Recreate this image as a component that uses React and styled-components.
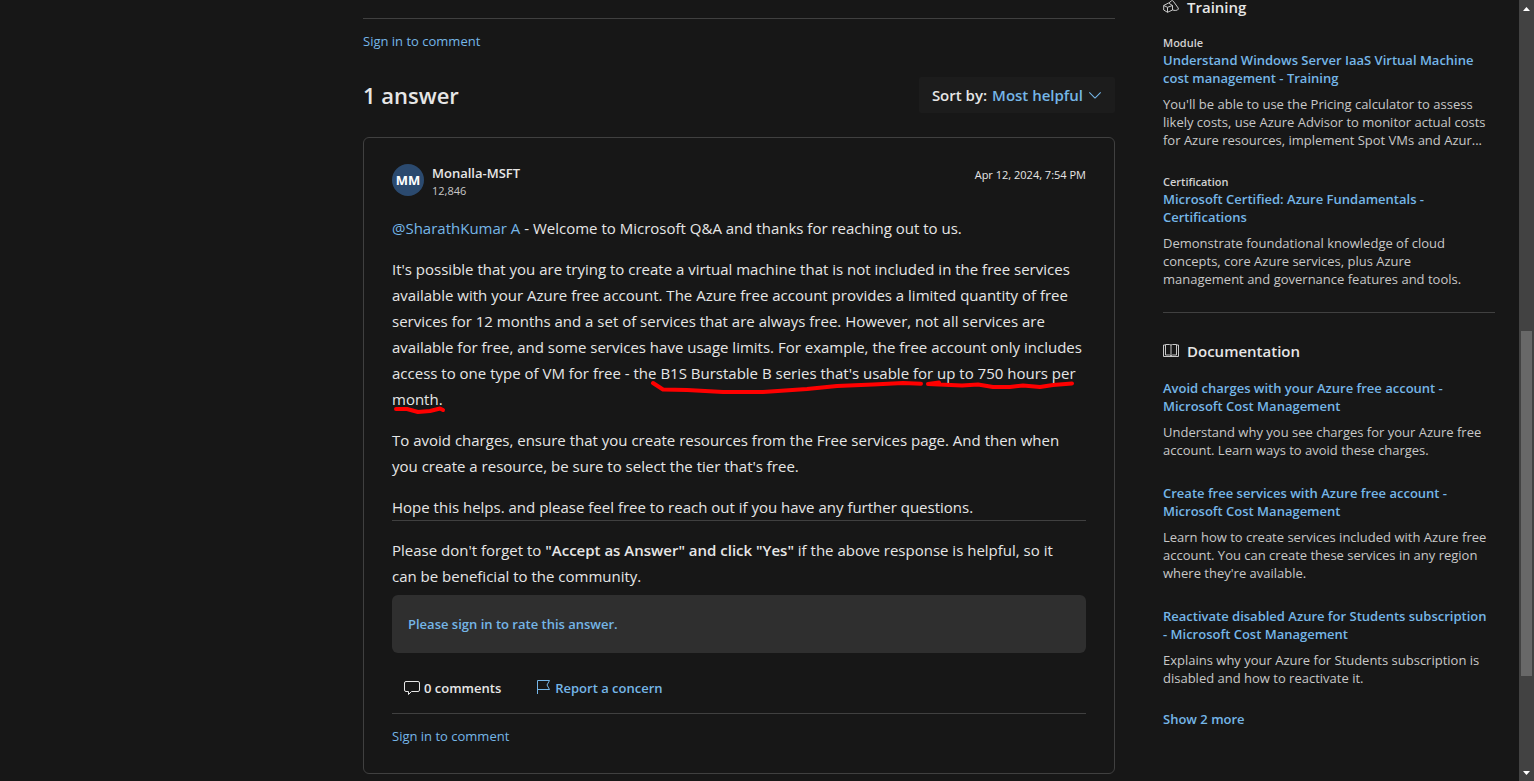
import styled, { createGlobalStyle } from 'styled-components';

const GlobalStyle = createGlobalStyle`
  * {
    box-sizing: border-box;
  }

  body {
    margin: 0;
    background: #171717;
    color: #e6e6e6;
    font-family: 'Open Sans', 'Noto Sans', sans-serif;
    font-size: 15px;
  }

  h2, h3, p, ul {
    margin: 0;
    padding: 0;
  }

  a {
    color: #75b6e7;
    text-decoration: none;
  }

  a:hover {
    text-decoration: underline;
  }
`;

const Shell = styled.div`
  display: grid;
  grid-template-columns: minmax(0, 1fr) 15px;
  height: 100vh;
  overflow: hidden;
`;

const Page = styled.div`
  display: grid;
  grid-template-columns: 291px minmax(0, 1fr) 332px;
  gap: 48px;
  padding: 0 24px;
`;

const Main = styled.main`
  grid-column: 2;
  padding-top: 18px;
`;

const Divider = styled.hr`
  height: 1px;
  margin: 0;
  border: 0;
  background: #404040;
`;

const SignInLink = styled.a`
  display: block;
  width: fit-content;
  margin-top: 12px;
  font-size: 13px;
  line-height: 20px;
`;

const AnswersHeader = styled.div`
  display: flex;
  align-items: center;
  justify-content: space-between;
  margin: 26px 0 24px;
`;

const AnswersTitle = styled.h2`
  font-size: 22px;
  font-weight: 600;
  line-height: 36px;
`;

const SortBox = styled.label`
  display: flex;
  align-items: center;
  gap: 5px;
  height: 36px;
  padding: 0 13px;
  border-radius: 2px;
  background: #1c1c1c;
  font-weight: 600;
`;

const SortSelect = styled.select`
  appearance: none;
  field-sizing: content;
  padding: 0;
  border: 0;
  background: none;
  color: #75b6e7;
  font: inherit;
  cursor: pointer;
`;

const Card = styled.article`
  padding: 26px 28px;
  border: 1px solid #404040;
  border-radius: 6px;
`;

const AuthorRow = styled.header`
  display: flex;
  align-items: flex-start;
  gap: 8px;
  margin-bottom: 15px;
`;

const Avatar = styled.span`
  display: flex;
  align-items: center;
  justify-content: center;
  width: 32px;
  height: 32px;
  border-radius: 50%;
  background: #2b4a6f;
  color: #ffffff;
  font-size: 13px;
  font-weight: 700;
`;

const Author = styled.div`
  display: flex;
  flex-direction: column;
  flex: 1;
  font-size: 13px;
  font-weight: 600;
  line-height: 18px;
`;

const Reputation = styled.span`
  color: #c8c8c8;
  font-size: 11px;
  font-weight: 400;
`;

const PostedAt = styled.time`
  font-size: 11px;
  line-height: 22px;
`;

const Body = styled.div`
  line-height: 26px;

  p + p {
    margin-top: 15px;
  }

  hr + p {
    margin-top: 16px;
  }

  b {
    font-weight: 600;
  }
`;

const MarkedParagraph = styled.p`
  position: relative;
`;

const Scribble = styled.svg`
  position: absolute;
  top: 0;
  left: 0;
  overflow: visible;
  fill: none;
  stroke: #ff0000;
  stroke-width: 4;
  stroke-linecap: round;
  stroke-linejoin: round;
  pointer-events: none;
`;

const RatePanel = styled.div`
  display: flex;
  align-items: center;
  height: 58px;
  margin-top: 6px;
  padding: 0 16px;
  border-radius: 6px;
  background: #2f2f2f;
  font-size: 13px;
  font-weight: 600;
`;

const Actions = styled.div`
  display: flex;
  gap: 34px;
  margin: 24px 0 14px;
  padding-left: 12px;
`;

const ActionButton = styled.button`
  display: flex;
  align-items: center;
  gap: 4px;
  height: 22px;
  padding: 0;
  border: 0;
  background: none;
  color: ${(props) => (props.$accent ? '#75b6e7' : '#e6e6e6')};
  font: 600 13px 'Open Sans', 'Noto Sans', sans-serif;
  cursor: pointer;
`;

const CardFooter = styled.footer`
  padding-bottom: 1px;
`;

const Aside = styled.aside`
  font-size: 13px;
  line-height: 18px;
`;

const AsideTitle = styled.h3`
  display: flex;
  align-items: center;
  gap: 8px;
  height: 14px;
  margin-bottom: 21px;
  font-size: 15px;
  font-weight: 600;
  line-height: 14px;

  svg {
    color: #c8c8c8;
  }
`;

const AsideDivider = styled(Divider)`
  margin: 24px 0 31px;
`;

const LinkList = styled.ul`
  display: grid;
  gap: 25px;
  list-style: none;
`;

const Kind = styled.div`
  color: #d2d2d2;
  font-size: 11px;
  font-weight: 600;
  line-height: 16px;
`;

const StrongLink = styled.a`
  font-weight: 600;
`;

const Summary = styled.p`
  margin-top: 8px;
  color: #c8c8c8;
`;

const ShowMore = styled(StrongLink)`
  display: block;
  width: fit-content;
  margin-top: 23px;
`;

const Scrollbar = styled.div`
  display: flex;
  flex-direction: column;
  background: #424242;
`;

const ScrollArrow = styled.div`
  display: flex;
  align-items: center;
  justify-content: center;
  height: 17px;
`;

const Track = styled.div`
  flex: 1;
  display: grid;
  grid-template-rows: 314fr 345fr 88fr;
  padding: 0 2px;
`;

const Thumb = styled.div`
  grid-row: 2;
  background: #686868;
`;

const Icon = ({ children, size = 16 }) => (
  <svg width={size} height={size} viewBox="0 0 16 16" fill="none" stroke="currentColor" strokeLinejoin="round" aria-hidden="true">
    {children}
  </svg>
);

const training = [
  {
    kind: 'Module',
    title: ['Understand Windows Server IaaS Virtual Machine', 'cost management - Training'],
    summary: ["You'll be able to use the Pricing calculator to assess", 'likely costs, use Azure Advisor to monitor actual costs', 'for Azure resources, implement Spot VMs and Azur...'],
  },
  {
    kind: 'Certification',
    title: ['Microsoft Certified: Azure Fundamentals -', 'Certifications'],
    summary: ['Demonstrate foundational knowledge of cloud', 'concepts, core Azure services, plus Azure', 'management and governance features and tools.'],
  },
];

const documentation = [
  {
    title: ['Avoid charges with your Azure free account -', 'Microsoft Cost Management'],
    summary: ['Understand why you see charges for your Azure free', 'account. Learn ways to avoid these charges.'],
  },
  {
    title: ['Create free services with Azure free account -', 'Microsoft Cost Management'],
    summary: ['Learn how to create services included with Azure free', 'account. You can create these services in any region', "where they're available."],
  },
  {
    title: ['Reactivate disabled Azure for Students subscription', '- Microsoft Cost Management'],
    summary: ['Explains why your Azure for Students subscription is', 'disabled and how to reactivate it.'],
  },
];

const Lines = ({ lines }) => lines.map((line, i) => (
  <span key={line}>
    {i > 0 && <br />}
    {line}
  </span>
));

const Resources = ({ items }) => (
  <LinkList>
    {items.map((item) => (
      <li key={item.title[0]}>
        {item.kind && <Kind>{item.kind}</Kind>}
        <StrongLink href="#"><Lines lines={item.title} /></StrongLink>
        <Summary><Lines lines={item.summary} /></Summary>
      </li>
    ))}
  </LinkList>
);

const App = () => {
  return (
    <>
      <GlobalStyle />
      <Shell>
        <Page>
          <Main>
            <Divider />
            <SignInLink href="#">Sign in to comment</SignInLink>
            <AnswersHeader>
              <AnswersTitle>1 answer</AnswersTitle>
              <SortBox>
                Sort by:
                <SortSelect defaultValue="helpful">
                  <option value="helpful">Most helpful</option>
                </SortSelect>
                <Icon size={14}><path d="M1.5 5 8 11.5 14.5 5" stroke="#75b6e7" strokeWidth="1.2" /></Icon>
              </SortBox>
            </AnswersHeader>
            <Card>
              <AuthorRow>
                <Avatar>MM</Avatar>
                <Author>
                  Monalla-MSFT
                  <Reputation>12,846</Reputation>
                </Author>
                <PostedAt>Apr 12, 2024, 7:54 PM</PostedAt>
              </AuthorRow>
              <Body>
                <p><a href="#">@SharathKumar A</a> - Welcome to Microsoft Q&amp;A and thanks for reaching out to us.</p>
                <MarkedParagraph>
                  It's possible that you are trying to create a virtual machine that is not included in the free services
                  available with your Azure free account. The Azure free account provides a limited quantity of free
                  services for 12 months and a set of services that are always free. However, not all services are
                  available for free, and some services have usage limits. For example, the free account only includes
                  access to one type of VM for free - the B1S Burstable B series that's usable for up to 750 hours per
                  month.
                  <Scribble width="694" height="156" viewBox="0 0 694 156" aria-hidden="true">
                    <path d="M261 127 271 133.500 295 134 331 136 371 136 415 133 445 130 481 128.500 511 127 529 127.700" />
                    <path d="M536 128 547 126.500M536 128 570 129.500 586 128.500 601 131 618 131 631 129.500 648 131 661 129 680 127.500" />
                    <path d="M4 153 15 153 26 156 38 155 48 152.500 51 154" />
                  </Scribble>
                </MarkedParagraph>
                <p>
                  To avoid charges, ensure that you create resources from the Free services page. And then when
                  you create a resource, be sure to select the tier that's free.
                </p>
                <p>Hope this helps. and please feel free to reach out if you have any further questions.</p>
                <Divider />
                <p>
                  Please don't forget to <b>"Accept as Answer" and click "Yes"</b> if the above response is helpful, so it
                  <br />
                  can be beneficial to the community.
                </p>
              </Body>
              <RatePanel><a href="#">Please sign in to rate this answer.</a></RatePanel>
              <Actions>
                <ActionButton type="button">
                  <Icon><path d="M2 1.500h12q1.500 0 1.500 1.500v7q0 1.500-1.500 1.500H7.500L4.500 14.500V11.500H2Q.5 11.500.5 10V3Q.5 1.500 2 1.500Z" /></Icon>
                  0 comments
                </ActionButton>
                <ActionButton type="button" $accent>
                  <Icon><path d="M2.500 14V.5H14.500L12 5 14.500 9.500H2.500" /></Icon>
                  Report a concern
                </ActionButton>
              </Actions>
              <CardFooter>
                <Divider />
                <SignInLink href="#">Sign in to comment</SignInLink>
              </CardFooter>
            </Card>
          </Main>
          <Aside>
            <AsideTitle>
              <Icon>
                <path d="M.7 6.500 5.500 4 9.500 6.500V11L4.500 13.300.7 11ZM.7 6.500 4.500 8.300 9.500 6.500M4.500 8.300V13.300M5.800 4 8.500 1.800Q9.500 1.300 10.300 2.200L15.200 9Q15.800 10.200 14.500 11 12.500 12 9.500 11" />
              </Icon>
              Training
            </AsideTitle>
            <Resources items={training} />
            <AsideDivider />
            <AsideTitle>
              <Icon>
                <path d="M.5 2V13.500H15.500V2M2.500 1.500H6.500L8 2 9.500 1.500H13.500V12H9.500L8 13 6.500 12H2.500ZM8 2V13M.5 2H2.500M13.500 2H15.500" />
              </Icon>
              Documentation
            </AsideTitle>
            <Resources items={documentation} />
            <ShowMore href="#">Show 2 more</ShowMore>
          </Aside>
        </Page>
        <Scrollbar aria-hidden="true">
          <ScrollArrow>
            <svg width="7" height="4" viewBox="0 0 7 4"><path d="M0 4 3.500 0 7 4Z" fill="#fff" /></svg>
          </ScrollArrow>
          <Track><Thumb /></Track>
          <ScrollArrow>
            <svg width="7" height="4" viewBox="0 0 7 4"><path d="M0 0 3.500 4 7 0Z" fill="#fff" /></svg>
          </ScrollArrow>
        </Scrollbar>
      </Shell>
    </>
  );
};

export default App;
